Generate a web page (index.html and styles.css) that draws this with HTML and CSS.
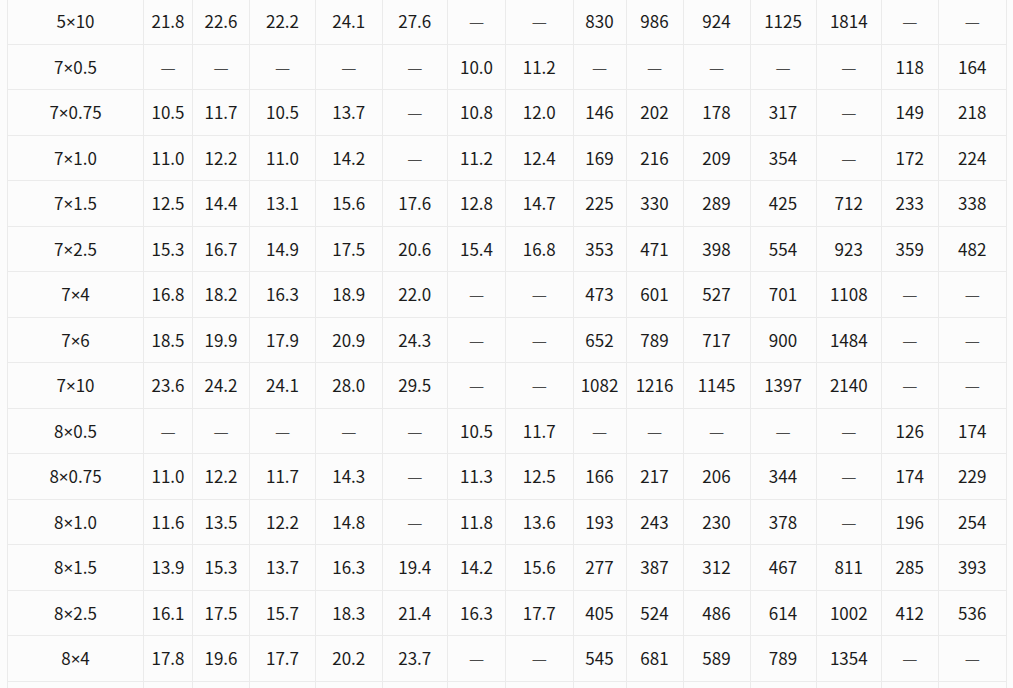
FILE: index.html
```html
<!DOCTYPE html>
<html lang="zh">
<head>
<meta charset="utf-8">
<title>规格表</title>
<link rel="stylesheet" href="styles.css">
</head>
<body>
<div class="wrap">
<table class="spec">
<colgroup>
<col class="c1"><col class="c2"><col class="c3"><col class="c4"><col class="c5"><col class="c6"><col class="c7"><col class="c8"><col class="c9"><col class="c10"><col class="c11"><col class="c12"><col class="c13"><col class="c14"><col class="c15">
</colgroup>
<tbody>
<tr><td>5<span class="x">×</span>10</td><td>21.8</td><td>22.6</td><td>22.2</td><td>24.1</td><td>27.6</td><td class="na">—</td><td class="na">—</td><td>830</td><td>986</td><td>924</td><td>1125</td><td>1814</td><td class="na">—</td><td class="na">—</td></tr>
<tr><td>7<span class="x">×</span>0.5</td><td class="na">—</td><td class="na">—</td><td class="na">—</td><td class="na">—</td><td class="na">—</td><td>10.0</td><td>11.2</td><td class="na">—</td><td class="na">—</td><td class="na">—</td><td class="na">—</td><td class="na">—</td><td>118</td><td>164</td></tr>
<tr><td>7<span class="x">×</span>0.75</td><td>10.5</td><td>11.7</td><td>10.5</td><td>13.7</td><td class="na">—</td><td>10.8</td><td>12.0</td><td>146</td><td>202</td><td>178</td><td>317</td><td class="na">—</td><td>149</td><td>218</td></tr>
<tr><td>7<span class="x">×</span>1.0</td><td>11.0</td><td>12.2</td><td>11.0</td><td>14.2</td><td class="na">—</td><td>11.2</td><td>12.4</td><td>169</td><td>216</td><td>209</td><td>354</td><td class="na">—</td><td>172</td><td>224</td></tr>
<tr><td>7<span class="x">×</span>1.5</td><td>12.5</td><td>14.4</td><td>13.1</td><td>15.6</td><td>17.6</td><td>12.8</td><td>14.7</td><td>225</td><td>330</td><td>289</td><td>425</td><td>712</td><td>233</td><td>338</td></tr>
<tr><td>7<span class="x">×</span>2.5</td><td>15.3</td><td>16.7</td><td>14.9</td><td>17.5</td><td>20.6</td><td>15.4</td><td>16.8</td><td>353</td><td>471</td><td>398</td><td>554</td><td>923</td><td>359</td><td>482</td></tr>
<tr><td>7<span class="x">×</span>4</td><td>16.8</td><td>18.2</td><td>16.3</td><td>18.9</td><td>22.0</td><td class="na">—</td><td class="na">—</td><td>473</td><td>601</td><td>527</td><td>701</td><td>1108</td><td class="na">—</td><td class="na">—</td></tr>
<tr><td>7<span class="x">×</span>6</td><td>18.5</td><td>19.9</td><td>17.9</td><td>20.9</td><td>24.3</td><td class="na">—</td><td class="na">—</td><td>652</td><td>789</td><td>717</td><td>900</td><td>1484</td><td class="na">—</td><td class="na">—</td></tr>
<tr><td>7<span class="x">×</span>10</td><td>23.6</td><td>24.2</td><td>24.1</td><td>28.0</td><td>29.5</td><td class="na">—</td><td class="na">—</td><td>1082</td><td>1216</td><td>1145</td><td>1397</td><td>2140</td><td class="na">—</td><td class="na">—</td></tr>
<tr><td>8<span class="x">×</span>0.5</td><td class="na">—</td><td class="na">—</td><td class="na">—</td><td class="na">—</td><td class="na">—</td><td>10.5</td><td>11.7</td><td class="na">—</td><td class="na">—</td><td class="na">—</td><td class="na">—</td><td class="na">—</td><td>126</td><td>174</td></tr>
<tr><td>8<span class="x">×</span>0.75</td><td>11.0</td><td>12.2</td><td>11.7</td><td>14.3</td><td class="na">—</td><td>11.3</td><td>12.5</td><td>166</td><td>217</td><td>206</td><td>344</td><td class="na">—</td><td>174</td><td>229</td></tr>
<tr><td>8<span class="x">×</span>1.0</td><td>11.6</td><td>13.5</td><td>12.2</td><td>14.8</td><td class="na">—</td><td>11.8</td><td>13.6</td><td>193</td><td>243</td><td>230</td><td>378</td><td class="na">—</td><td>196</td><td>254</td></tr>
<tr><td>8<span class="x">×</span>1.5</td><td>13.9</td><td>15.3</td><td>13.7</td><td>16.3</td><td>19.4</td><td>14.2</td><td>15.6</td><td>277</td><td>387</td><td>312</td><td>467</td><td>811</td><td>285</td><td>393</td></tr>
<tr><td>8<span class="x">×</span>2.5</td><td>16.1</td><td>17.5</td><td>15.7</td><td>18.3</td><td>21.4</td><td>16.3</td><td>17.7</td><td>405</td><td>524</td><td>486</td><td>614</td><td>1002</td><td>412</td><td>536</td></tr>
<tr><td>8<span class="x">×</span>4</td><td>17.8</td><td>19.6</td><td>17.7</td><td>20.2</td><td>23.7</td><td class="na">—</td><td class="na">—</td><td>545</td><td>681</td><td>589</td><td>789</td><td>1354</td><td class="na">—</td><td class="na">—</td></tr>
<tr class="tail"><td></td><td></td><td></td><td></td><td></td><td></td><td></td><td></td><td></td><td></td><td></td><td></td><td></td><td></td><td></td></tr>
</tbody>
</table>
</div>
</body>
</html>
```

FILE: styles.css
```css
html, body {
  margin: 0;
  padding: 0;
  background: #fcfcfc;
}
body {
  font-family: "Noto Sans CJK SC", "Noto Sans", sans-serif;
  color: #1b1b1b;
  overflow: hidden;
}
.wrap {
  padding: 0 7px;
}
.spec {
  table-layout: fixed;
  width: 999px;
  border-collapse: collapse;
  margin-top: -2px;
  background: #fcfcfc;
}
.spec td {
  border: 1px solid #ebebeb;
  padding: 10px 0;
  height: 24.5px;
  line-height: 24.5px;
  font-size: 17px;
  text-align: center;
  white-space: nowrap;
  overflow: hidden;
}
.spec td.na {
  color: #4a4a4a;
}
.spec .x {
  font-family: "Noto Sans", sans-serif;
  line-height: 0;
}
.c1 { width: 136px; }
.c2 { width: 49px; }
.c3 { width: 57px; }
.c4 { width: 66px; }
.c5 { width: 66.5px; }
.c6 { width: 65.5px; }
.c7 { width: 58px; }
.c8 { width: 67.5px; }
.c9 { width: 53px; }
.c10 { width: 57px; }
.c11 { width: 67px; }
.c12 { width: 66px; }
.c13 { width: 65.5px; }
.c14 { width: 56.5px; }
.c15 { width: 68.5px; }
```
